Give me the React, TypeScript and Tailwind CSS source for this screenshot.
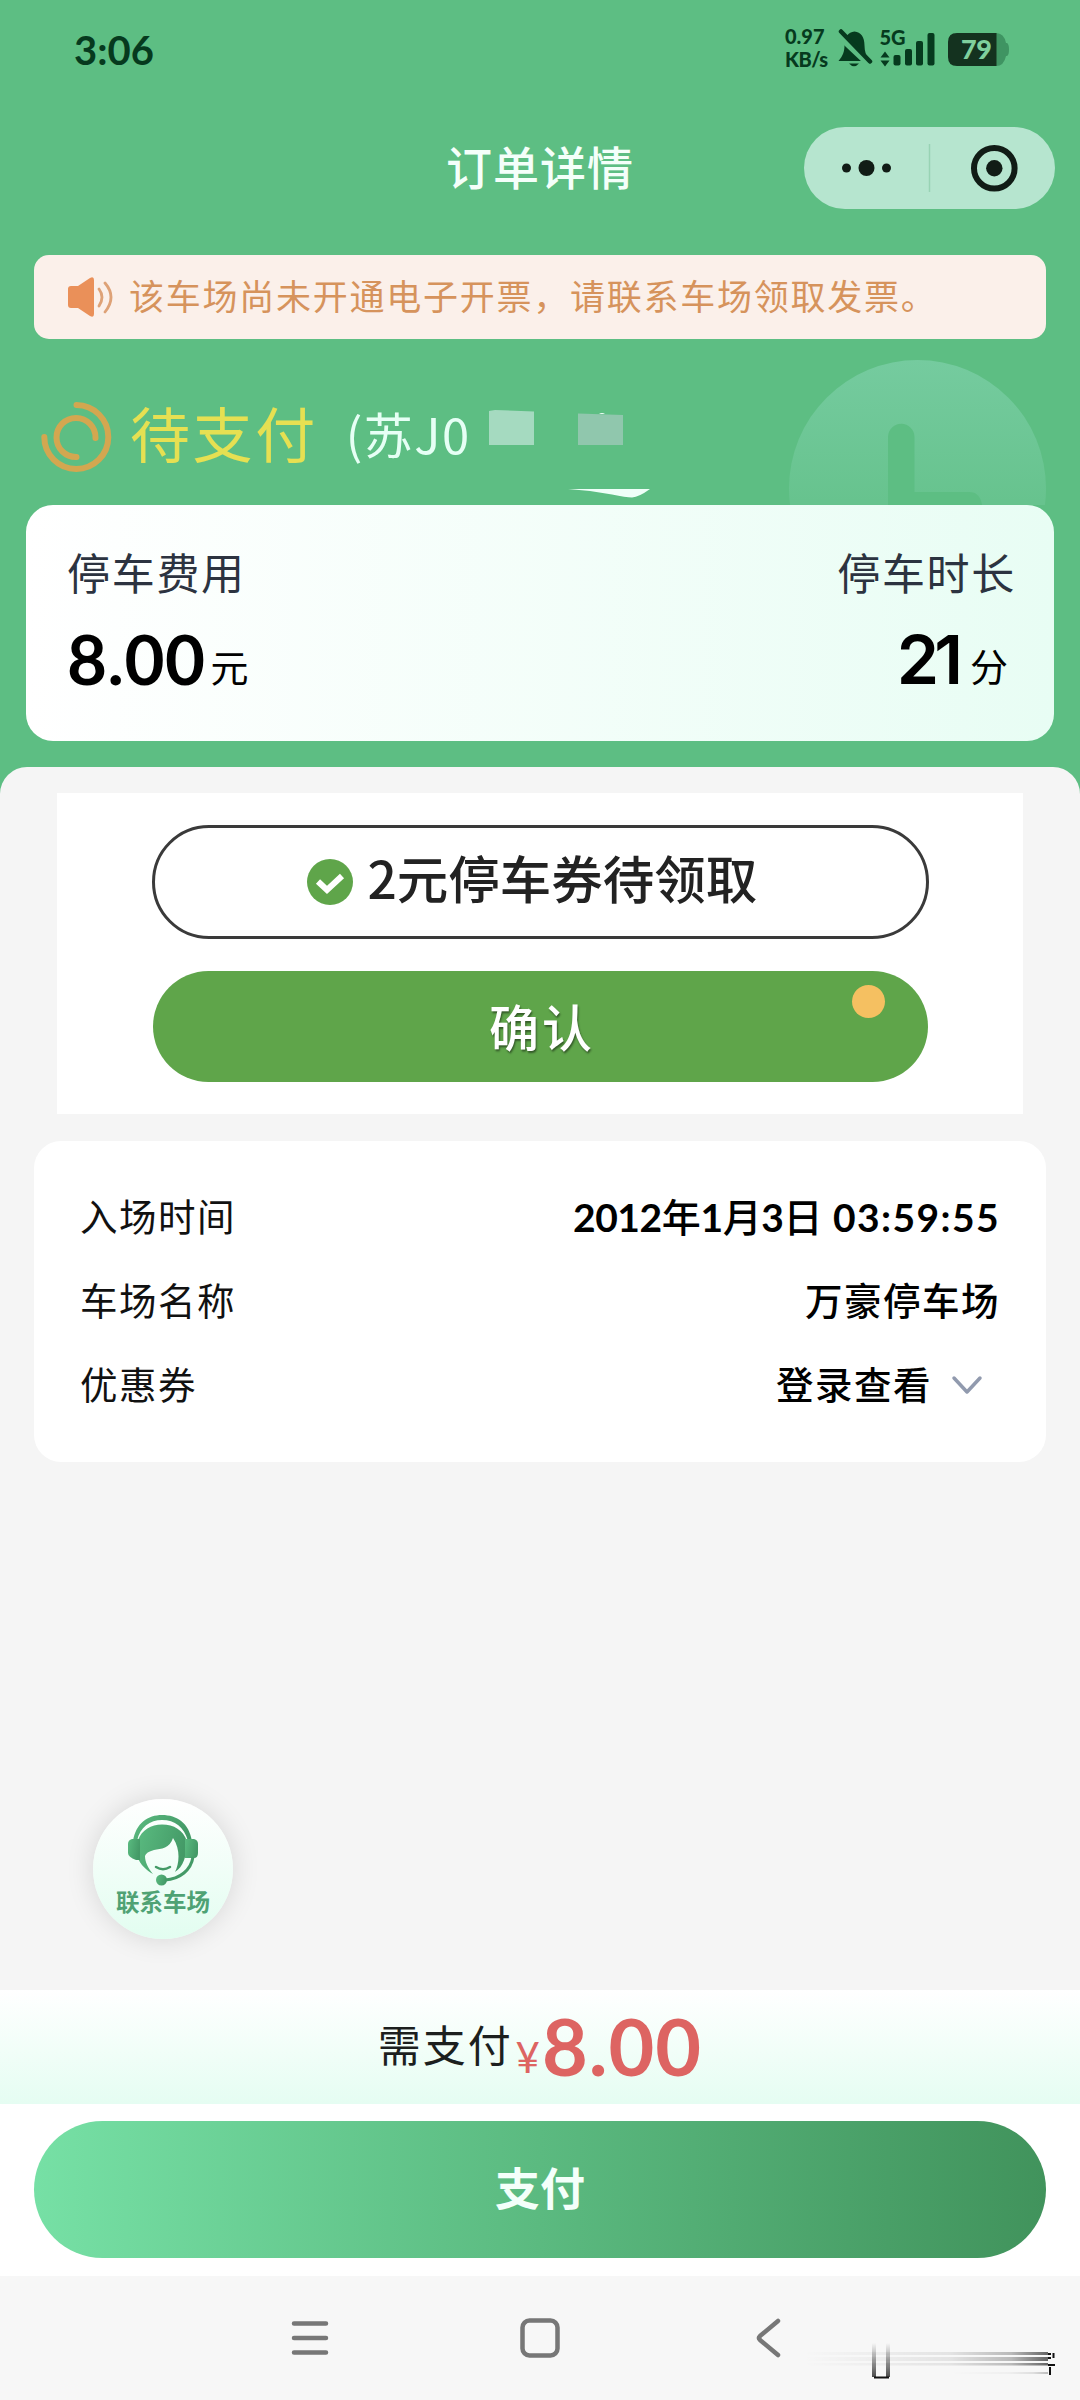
import { ReactNode } from 'react';

const StatusBar = () => {
  return (
    <div className="flex h-[100px] items-start pt-[20px] pl-[74px] text-[#063a1e]">
      <span className="pt-[8px] text-[40px] leading-[44px] font-bold">3:06</span>
      <div className="ml-auto flex pr-[70px]">
        <div className="w-[53px] pt-[5px] text-[20px] leading-[23px] font-black">
          <p>0.97</p>
          <p className="tracking-tight">KB/s</p>
        </div>
        <svg width="172" height="49" viewBox="838 20 172 49">
          {/* muted bell */}
          <path
            d="M838.5 61 C843 56 844.500 51 844.500 45.500 C844.500 37 848 32 854.500 31.500 C861 32 864.500 37 864.500 45.500 C864.500 51 866 56 869.500 61 Z"
            fill="#063a1e"
          />
          <path d="M849 63.500 H859 Q854 69 849 63.500Z" fill="#063a1e" />
          <path d="M838 34 L870 64" stroke="#5dbe83" strokeWidth="8" />
          <path
            d="M841 31.500 L870 61.500"
            stroke="#063a1e"
            strokeWidth="4.500"
            strokeLinecap="round"
          />
          {/* signal */}
          <text
            x="879.500"
            y="45"
            fontSize="20"
            fontWeight="900"
            fill="#063a1e"
            textLength="26"
          >
            5G
          </text>
          <path
            d="M885 51.500 L889.500 57.500 H880.500Z M885 66.500 L889.500 60.500 H880.500Z"
            fill="#063a1e"
          />
          <rect x="893.500" y="55" width="7" height="10.500" rx="2" fill="#063a1e" />
          <rect x="905" y="49" width="7" height="16.500" rx="2" fill="#063a1e" />
          <rect x="916" y="41" width="7" height="24.500" rx="2" fill="#063a1e" />
          <rect x="927.500" y="33" width="7" height="32.500" rx="2" fill="#063a1e" />
          {/* battery */}
          <path
            d="M996 33 Q1004 33 1006 43 H1007 Q1009 44 1009 49.500 Q1009 55 1007 56 H1006 Q1004 66 996 66Z"
            fill="#3f9462"
          />
          <path
            d="M957 33 H996.500 V66 H957 Q948 66 948 57 V42 Q948 33 957 33Z"
            fill="#14321f"
          />
          <text
            x="961"
            y="59"
            fontSize="27"
            fontWeight="900"
            fill="#7fcf9d"
            textLength="31"
          >
            79
          </text>
        </svg>
      </div>
    </div>
  );
};

const TitleBar = () => {
  return (
    <div className="relative flex h-[155px] justify-center pt-[35px]">
      <h1 className="text-[46px] leading-[66px] font-medium tracking-[1px] text-[#f4fffa]">
        订单详情
      </h1>
      <div className="absolute top-[27px] right-[25px] flex h-[82px] w-[251px] items-center rounded-full bg-[#b6e5cf]">
        <svg width="251" height="82" viewBox="0 0 251 82">
          <circle cx="42.500" cy="41" r="4.500" fill="#111c16" />
          <circle cx="62.500" cy="41" r="8" fill="#111c16" />
          <circle cx="82.500" cy="41" r="4.500" fill="#111c16" />
          <path d="M125.5 17 V65" stroke="#98d3b4" strokeWidth="1.500" />
          <circle
            cx="190.300"
            cy="41.300"
            r="20.300"
            fill="none"
            stroke="#111c16"
            strokeWidth="6"
          />
          <circle cx="190.300" cy="41.300" r="8.200" fill="#111c16" />
        </svg>
      </div>
    </div>
  );
};

const Notice = () => {
  return (
    <div className="mx-[34px] flex h-[84px] items-center rounded-[15px] bg-[#fbf0ea] pl-[33px] text-[#d6935c]">
      <svg width="46" height="40" viewBox="0 0 46 40">
        <path
          d="M4 9 H11 L23 1 Q27 -1 27 3 V37 Q27 41 23 39 L11 31 H4 Q1 31 1 28 V12 Q1 9 4 9Z"
          fill="#ea9059"
        />
        <path
          d="M32 12 Q38 20 32 29 M38 6 Q50 20 38 35"
          fill="none"
          stroke="#dea277"
          strokeWidth="2.800"
          strokeLinecap="round"
        />
      </svg>
      <p className="-mt-[2px] ml-[16px] text-[35px] leading-[50px] tracking-[1.75px] whitespace-nowrap">
        该车场尚未开通电子开票，请联系车场领取发票。
      </p>
    </div>
  );
};

const PayStatus = () => {
  return (
    <div className="relative h-[166px] overflow-hidden">
      <svg
        className="absolute top-0 left-0"
        width="1080"
        height="166"
        viewBox="0 339 1080 166"
      >
        <defs>
          <linearGradient id="clock" x1="0" y1="0" x2="0" y2="1">
            <stop offset="0" stopColor="#75cb9f" />
            <stop offset="0.550" stopColor="#67c38e" />
          </linearGradient>
        </defs>
        <circle cx="917.500" cy="488.500" r="128.500" fill="url(#clock)" />
        <path
          d="M888 520 V437 A13.250 13.250 0 0 1 914.500 437 V492 H969 Q980 492 982 505 V520Z"
          fill="#5dbe83"
        />
        {/* covered part of the plate number */}
        <path d="M489 411 L495 410 L534 411.500 V445 H489Z" fill="#a5dac0" />
        <path d="M578 413.500 L623 415 V445 H578Z" fill="#90c7ad" />
        <path d="M599 414 Q602 412 605 414Z" fill="#f4fffa" />
        <path
          d="M568 489 H650 Q639 497 632 497.500 Q626 497.500 612 494.500 Q590 490 568 489Z"
          fill="#effff8"
        />
        <g fill="none" stroke="#d3a750" strokeWidth="6" strokeLinecap="round">
          <path d="M76.500 405 A32 32 0 1 1 44.300 437" />
          <path d="M95.500 438 A19.500 19.500 0 1 0 76.500 457" />
        </g>
      </svg>
      <div className="relative flex h-full items-start pt-[52px] pl-[130px]">
        <span className="text-[60px] leading-[88px] tracking-[2.600px] text-[#e6e052]">
          待支付
        </span>
        <span className="ml-[28px] font-['Noto_Sans_CJK_SC',sans-serif] text-[49px] leading-[84px] tracking-[1.500px] text-[#e6fff5]">
          (苏J0
        </span>
      </div>
    </div>
  );
};

const FeeCard = () => {
  return (
    <div className="mx-[26px] flex h-[236px] justify-between rounded-[27px] bg-linear-to-r from-white to-[#e8fdf4] pt-[37px] pr-[38px] pl-[41px]">
      <div>
        <p className="text-[43px] leading-[64px] tracking-[1.700px] text-[#2c3340]">
          停车费用
        </p>
        <p className="mt-[6px] flex items-baseline leading-[94px] text-black">
          <span className="text-[69px] font-bold tracking-[0.500px]">8.00</span>
          <span className="relative -top-[3px] ml-[5px] text-[38px]">元</span>
        </p>
      </div>
      <div className="flex flex-col items-end">
        <p className="text-[43px] leading-[64px] tracking-[1.700px] text-[#2c3340]">
          停车时长
        </p>
        <p className="mt-[6px] flex items-baseline pr-[8px] leading-[94px] text-black">
          <span className="font-['Inter',sans-serif] text-[68px] font-semibold tracking-[-5px]">
            21
          </span>
          <span className="relative -top-[3px] ml-[12px] text-[38px]">分</span>
        </p>
      </div>
    </div>
  );
};

const Coupon = () => {
  return (
    <div className="mx-[57px] flex h-[321px] flex-col items-center bg-white pt-[32px] font-['Noto_Sans_CJK_SC',sans-serif]">
      <div className="flex h-[114px] w-[777px] items-center rounded-full border-[3px] border-[#3a3a3a] pl-[152px]">
        <svg width="46" height="46" viewBox="0 0 46 46">
          <circle cx="23" cy="23" r="23" fill="#5fa54a" />
          <path
            d="M11 22.500 L20 31 L35 17"
            fill="none"
            stroke="white"
            strokeWidth="6"
          />
        </svg>
        <span className="-mt-[10px] ml-[15px] text-[51.500px] leading-[76px] font-medium text-[#222222]">
          2元停车券待领取
        </span>
      </div>
      <button className="relative mt-[32px] h-[111px] w-[775px] rounded-full bg-[#5fa54a] pb-[3px] pl-[4px] text-[50px] font-medium tracking-[3px] text-white [text-shadow:1px_2px_2px_rgba(0,0,0,0.450)]">
        确认
        <span className="absolute top-[14px] right-[43px] h-[33px] w-[33px] rounded-full bg-[#f5c061]" />
      </button>
    </div>
  );
};

const InfoRow = ({ label, children }: { label: string; children: ReactNode }) => {
  return (
    <div className="flex h-[84px] items-center justify-between">
      <span className="text-[37.500px] tracking-[1.500px] text-[#111111]">
        {label}
      </span>
      <span className="flex items-center text-[37.500px] font-medium text-black">
        {children}
      </span>
    </div>
  );
};

const InfoCard = () => {
  return (
    <div className="mx-[34px] mt-[27px] h-[321px] rounded-[27px] bg-white pt-[34px] pr-[46px] pl-[46px]">
      <InfoRow label="入场时间">
        <span className="text-[39px] tracking-[-0.400px] whitespace-pre">
          <b className="font-bold">2012</b>年<b className="font-bold">1</b>月
          <b className="font-bold">3</b>日
          <b className="font-bold tracking-[1.400px]"> 03:59:55</b>
        </span>
      </InfoRow>
      <InfoRow label="车场名称">
        <span className="tracking-[1.500px]">万豪停车场</span>
      </InfoRow>
      <InfoRow label="优惠券">
        <span className="tracking-[1.500px]">登录查看</span>
        <svg className="mr-[17px] ml-[19px]" width="32" height="22" viewBox="0 0 32 22">
          <path
            d="M3 4 L16 18 L29 4"
            fill="none"
            stroke="#919aae"
            strokeWidth="3.500"
            strokeLinecap="round"
            strokeLinejoin="round"
          />
        </svg>
      </InfoRow>
    </div>
  );
};

const ContactButton = () => {
  return (
    <button className="mt-auto mb-[51px] ml-[93px] flex h-[140px] w-[140px] flex-col items-center rounded-full bg-linear-to-b from-white to-[#e2fdf0] pt-[15px] shadow-[0_0_28px_rgba(0,0,0,0.130)]">
      <svg width="72" height="72" viewBox="0 0 72 72">
        <defs>
          <linearGradient id="agent" x1="0" y1="0" x2="1" y2="0.300">
            <stop offset="0" stopColor="#5abb80" />
            <stop offset="1" stopColor="#449a67" />
          </linearGradient>
        </defs>
        <g fill="url(#agent)">
          {/* headband */}
          <path d="M6 27 C9 9 21 1 35 1 C50 1 62 9 65 27 L61 27 C57 13 48 6 35 6 C23 6 13 13 10 27Z" />
          {/* hair */}
          <path d="M11 26 C15 16 24 10.500 35 10.500 C47 10.500 56 16 60 27 C60 42 56 53 48 58 C52 50 54 36 46 24 C43 34 34 35 27 36 Q19 38 18 42 C18 48 21 54 26 60 C19 56 13 50 11 44Z" />
          <path d="M5 25 H13 V46 H9 Q1 43 1 39 V30 Q1 26 5 25Z" />
          <path d="M58 25 H67 Q71 26 71 30 V39 Q71 44 67 44 H58Z" />
          <circle cx="34.500" cy="66" r="5.500" />
        </g>
        <path d="M29 53 Q36 57.500 43 53" fill="none" stroke="#449a67" strokeWidth="2.500" strokeLinecap="round" />
        <path d="M66 43 C64 56 53 65 38 66" fill="none" stroke="#449a67" strokeWidth="3" />
      </svg>
      <span className="mt-[1px] text-[23.500px] leading-[30px] font-bold text-[#4fa274]">
        联系车场
      </span>
    </button>
  );
};

const PayFooter = () => {
  return (
    <div className="h-[286px] bg-white">
      <div className="flex h-[114px] items-baseline justify-center bg-linear-to-b from-white to-[#e5fdf2] leading-[112px]">
        <span className="relative -top-[14px] text-[43px] tracking-[1.900px] text-[#1c1f1e]">
          需支付
        </span>
        <span className="relative -top-[3px] ml-[3px] text-[42px] text-[#dd6462]">
          ¥
        </span>
        <span className="ml-[2px] text-[79px] font-bold tracking-[1px] text-[#dd6462]">
          8.00
        </span>
      </div>
      <button className="mx-[34px] mt-[17px] flex h-[137px] w-[1012px] items-center justify-center rounded-full bg-linear-to-r from-[#76e0a5] via-[#5bba80] to-[#41935c] text-[45px] font-bold text-[#f4fffa]">
        支付
      </button>
    </div>
  );
};

const NavBar = () => {
  return (
    <div className="h-[124px] bg-[#f7f7f7]">
      <svg width="1080" height="124" viewBox="0 2276 1080 124">
        <defs>
          <linearGradient id="streak">
            <stop offset="0" stopColor="#000" stopOpacity="0" />
            <stop offset="0.600" stopColor="#000" stopOpacity="0.080" />
            <stop offset="0.850" stopColor="#000" stopOpacity="0.250" />
            <stop offset="1" stopColor="#000" stopOpacity="0.600" />
          </linearGradient>
          <linearGradient id="drip" x1="0" y1="0" x2="0" y2="1">
            <stop offset="0" stopColor="#000" stopOpacity="0" />
            <stop offset="1" stopColor="#000" stopOpacity="0.700" />
          </linearGradient>
        </defs>
        <g fill="none" stroke="#777777" strokeWidth="4.500" strokeLinecap="round">
          <path d="M294 2323.500 H326 M294 2338 H326 M294 2352.500 H326" />
          <rect x="522.500" y="2320.500" width="35" height="35" rx="7" />
          <path d="M778 2321 L760 2336 Q758 2338 760 2340 L778 2355" strokeLinejoin="round" />
        </g>
        {/* smeared corner mark */}
        <g fill="url(#streak)">
          <rect x="803" y="2352" width="245" height="3" />
          <rect x="803" y="2357" width="245" height="4" />
          <rect x="803" y="2363" width="245" height="2.500" />
          <rect x="950" y="2372" width="98" height="2" opacity="0.400" />
        </g>
        <rect x="872" y="2343" width="4" height="34" fill="url(#drip)" />
        <rect x="886" y="2343" width="4" height="34" fill="url(#drip)" />
        <path
          d="M874 2377.500 H889 M1048 2354 H1051 M1053.500 2353 V2358 M1048 2358 H1051 M1048 2365 H1055 M1050 2367 V2375"
          stroke="#111111"
          strokeWidth="2"
        />
      </svg>
    </div>
  );
};

const App = () => {
  return (
    <div className="flex h-[2400px] w-[1080px] flex-col overflow-hidden bg-[#5dbe83] font-['Lato','Noto_Sans_CJK_SC',sans-serif]">
      <StatusBar />
      <TitleBar />
      <Notice />
      <PayStatus />
      <FeeCard />
      <div className="mt-[26px] flex flex-1 flex-col rounded-t-[27px] bg-[#f5f5f5] pt-[26px]">
        <Coupon />
        <InfoCard />
        <ContactButton />
      </div>
      <PayFooter />
      <NavBar />
    </div>
  );
};

export default App;
